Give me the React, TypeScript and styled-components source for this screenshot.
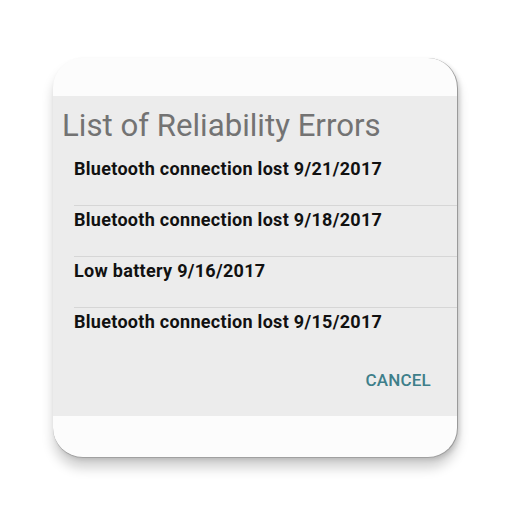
import React from "react";
import styled, { createGlobalStyle } from "styled-components";

const Global = createGlobalStyle`
  html, body { margin: 0; padding: 0; background: #ffffff; }
  body { width: 512px; height: 512px; overflow: hidden; font-family: Roboto, "Liberation Sans", sans-serif; }
`;

const Page = styled.div`
  width: 512px;
  height: 512px;
  box-sizing: border-box;
  padding: 58px 0 0 53px;
  background: #ffffff;
`;

const Card = styled.div`
  width: 405px;
  height: 400px;
  border-radius: 30px;
  background: #fcfcfc;
  overflow: hidden;
  display: flex;
  flex-direction: column;
  box-sizing: border-box;
  border-right: 1.5px solid #9a9a9a;
  border-bottom: 1.5px solid #a0a0a0;
  box-shadow: 0 10px 12px rgba(0, 0, 0, 0.18), 2px 2px 4px rgba(0, 0, 0, 0.12);
`;

const TopBand = styled.div`
  height: 38px;
  flex: none;
`;

const Dialog = styled.div`
  height: 320px;
  flex: none;
  background: #ececec;
  display: flex;
  flex-direction: column;
`;

const Title = styled.div`
  font-family: Roboto, "Liberation Sans", sans-serif;
  font-size: 31.2px;
  color: #737373;
  padding: 12px 0 0 9px;
  line-height: 36px;
  height: 47px;
`;

const List = styled.div`
  display: flex;
  flex-direction: column;
  padding-left: 21px;
`;

const Row = styled.div<{ $divider: boolean }>`
  height: 51px;
  box-sizing: border-box;
  border-bottom: ${(p) => (p.$divider ? "1px solid #d6d6d6" : "none")};
  font-weight: 700;
  font-size: 18px;
  letter-spacing: 0.3px;
  color: #111111;
  padding-top: 3px;
  line-height: 22px;
`;

const Actions = styled.div`
  display: flex;
  justify-content: flex-end;
  padding: 11px 26px 0 0;
`;

const Cancel = styled.div`
  font-family: Roboto, "Liberation Sans", sans-serif;
  font-weight: 500;
  font-size: 17px;
  color: #3e7f8a;
  letter-spacing: 0.2px;
`;

const items = [
  "Bluetooth connection lost 9/21/2017",
  "Bluetooth connection lost 9/18/2017",
  "Low battery 9/16/2017",
  "Bluetooth connection lost 9/15/2017",
];

export default function App() {
  return (
    <>
      <Global />
      <Page>
        <Card>
          <TopBand />
          <Dialog>
            <Title>List of Reliability Errors</Title>
            <List>
              {items.map((t, i) => (
                <Row key={i} $divider={i < items.length - 1}>
                  {t}
                </Row>
              ))}
            </List>
            <Actions>
              <Cancel>CANCEL</Cancel>
            </Actions>
          </Dialog>
        </Card>
      </Page>
    </>
  );
}
